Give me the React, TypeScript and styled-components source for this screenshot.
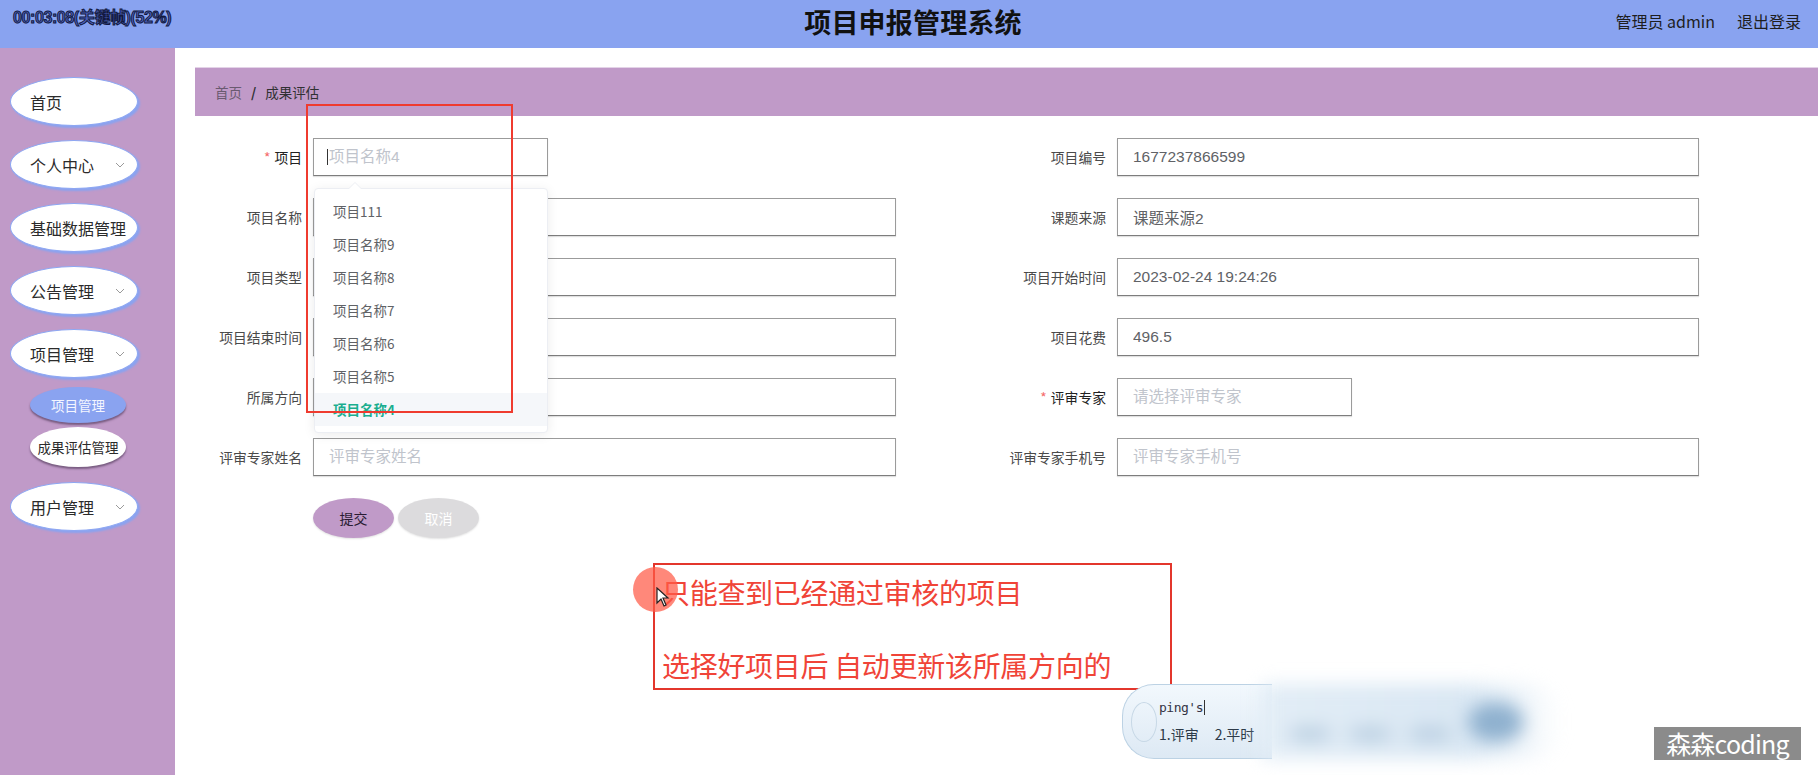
import React from 'react';
import styled, {createGlobalStyle} from 'styled-components';

const GlobalStyle = createGlobalStyle`
  html, body {
    margin: 0;
    padding: 0;
    background: #fff;
    font-family: "Liberation Sans", "Noto Sans CJK SC", sans-serif;
  }
  * {
    box-sizing: border-box;
  }
`

type MenuType = {
    title: string
    arrow: boolean
}

const menus: MenuType[] = [
    {title: '首页', arrow: false},
    {title: '个人中心', arrow: true},
    {title: '基础数据管理', arrow: false},
    {title: '公告管理', arrow: true},
    {title: '项目管理', arrow: true},
]

const options = ['项目111', '项目名称9', '项目名称8', '项目名称7', '项目名称6', '项目名称5', '项目名称4']

type FieldType = {
    label: string
    value?: string
    placeholder?: string
    required?: boolean
    short?: boolean
}

const leftFields: FieldType[] = [
    {label: '项目名称'},
    {label: '项目类型'},
    {label: '项目结束时间'},
    {label: '所属方向'},
    {label: '评审专家姓名', placeholder: '评审专家姓名'},
]

const rightFields: FieldType[] = [
    {label: '项目编号', value: '1677237866599'},
    {label: '课题来源', value: '课题来源2'},
    {label: '项目开始时间', value: '2023-02-24 19:24:26'},
    {label: '项目花费', value: '496.5'},
    {label: '评审专家', placeholder: '请选择评审专家', required: true, short: true},
    {label: '评审专家手机号', placeholder: '评审专家手机号'},
]

const Chevron = () => (
    <svg width="10" height="6" viewBox="0 0 10 6">
        <path d="M1 1 L5 5 L9 1" fill="none" stroke="#9a9a9a" strokeWidth="1"/>
    </svg>
)

const App = () => {
    return (
        <Page>
            <GlobalStyle/>
            <Header>
                <span/>
                <Title>项目申报管理系统</Title>
                <UserBar>
                    <span>管理员 admin</span>
                    <span>退出登录</span>
                </UserBar>
                <TimeStamp>00:03:08(关键帧)(52%)</TimeStamp>
            </Header>
            <Body>
                <Sidebar>
                    {menus.map(m => (
                        <MenuItem key={m.title}>
                            <span>{m.title}</span>
                            {m.arrow && <Chevron/>}
                        </MenuItem>
                    ))}
                    <SubMenu>
                        <SubItem active>项目管理</SubItem>
                        <SubItem>成果评估管理</SubItem>
                    </SubMenu>
                    <MenuItem>
                        <span>用户管理</span>
                        <Chevron/>
                    </MenuItem>
                </Sidebar>
                <Main>
                    <Breadcrumb>
                        <Crumb>首页</Crumb>
                        <Slash>/</Slash>
                        <Crumb current>成果评估</Crumb>
                    </Breadcrumb>
                    <Form>
                        <Column>
                            <FormItem>
                                <Label required>项目</Label>
                                <SelectWrap>
                                    <Input short placeholder="项目名称4" readOnly/>
                                    <Caret/>
                                    <Popper>
                                        <PopArrow/>
                                        {options.map(o => (
                                            <Option key={o} selected={o === '项目名称4'}>{o}</Option>
                                        ))}
                                    </Popper>
                                </SelectWrap>
                            </FormItem>
                            {leftFields.map(f => (
                                <FormItem key={f.label}>
                                    <Label required={f.required}>{f.label}</Label>
                                    <Input placeholder={f.placeholder} defaultValue={f.value} readOnly/>
                                </FormItem>
                            ))}
                        </Column>
                        <Column>
                            {rightFields.map(f => (
                                <FormItem key={f.label}>
                                    <Label required={f.required}>{f.label}</Label>
                                    <Input short={f.short} placeholder={f.placeholder} defaultValue={f.value} readOnly/>
                                </FormItem>
                            ))}
                        </Column>
                    </Form>
                    <Buttons>
                        <Button kind="submit">提交</Button>
                        <Button kind="cancel">取消</Button>
                    </Buttons>
                </Main>
            </Body>

            <MarkBox/>
            <NoteBox>
                <NoteLine>只能查到已经通过审核的项目</NoteLine>
                <NoteLine>选择好项目后 自动更新该所属方向的</NoteLine>
            </NoteBox>
            <ClickDot/>
            <Cursor width="14" height="20" viewBox="0 0 14 20">
                <path d="M1 1 L1 16 L5 12 L8 19 L10 18 L7 11 L12 11 Z" fill="#fff" stroke="#222" strokeWidth="1.2"/>
            </Cursor>

            <Ime>
                <ImeClear>
                    <ImeSwirl/>
                    <ImeText>
                        <ImeInput>ping's</ImeInput>
                        <ImeCandidates>
                            <span>1.评审</span>
                            <span>2.平时</span>
                        </ImeCandidates>
                    </ImeText>
                </ImeClear>
                <ImeBlur>
                    <Blob w={44}/>
                    <Blob w={44}/>
                    <Blob w={44}/>
                    <Blob w={56} dark/>
                </ImeBlur>
            </Ime>
            <Watermark>森森coding</Watermark>
        </Page>
    );
};

export default App;

const Page = styled.div`
  position: relative;
  width: 1818px;
  height: 775px;
  overflow: hidden;
  background: #fff;
`

const Header = styled.header`
  position: relative;
  height: 48px;
  background: #89a3f0;
  display: grid;
  grid-template-columns: 1fr auto 1fr;
  align-items: center;
`

const Title = styled.h1`
  margin: 0 0 6px 8px;
  font-family: "Noto Sans CJK SC", sans-serif;
  font-size: 27px;
  font-weight: 700;
  color: #111;
  letter-spacing: 0.2px;
`

const UserBar = styled.div`
  justify-self: end;
  display: flex;
  gap: 22px;
  padding-right: 17px;
  margin-bottom: 6px;
  font-family: "Noto Sans CJK SC", sans-serif;
  font-size: 16px;
  color: #1e1e1e;
`

const TimeStamp = styled.div`
  position: absolute;
  left: 13px;
  top: 4px;
  font-family: "Liberation Sans", "Noto Sans CJK SC", sans-serif;
  font-size: 16px;
  font-weight: 700;
  color: #4d62c0;
  -webkit-text-stroke: 1px #121940;
  letter-spacing: -0.4px;
  white-space: nowrap;
`

const Body = styled.div`
  display: flex;
  height: 727px;
`

const Sidebar = styled.nav`
  width: 175px;
  flex-shrink: 0;
  background: #c09ac8;
  padding: 29px 0 0 10px;
  display: flex;
  flex-direction: column;
`

const MenuItem = styled.div`
  width: 128px;
  height: 49px;
  margin-bottom: 14px;
  border-radius: 50%;
  background: #fff;
  border: 1px solid #8ea7f2;
  box-shadow: 2px 2px 2px #8aa3f0;
  display: flex;
  align-items: center;
  justify-content: space-between;
  padding: 0 12px 0 19px;
  font-family: "Noto Sans CJK SC", sans-serif;
  font-size: 16px;
  color: #2b2b2b;
  white-space: nowrap;
`

const SubMenu = styled.div`
  display: flex;
  flex-direction: column;
  gap: 4px;
  margin: -5px 0 15px 20px;
`

const SubItem = styled.div<{ active?: boolean }>`
  width: 96px;
  height: ${props => props.active ? '36px' : '40px'};
  border-radius: 50%;
  background: ${props => props.active ? '#8aa3f0' : '#fff'};
  color: ${props => props.active ? '#f4f6ff' : '#2b2b2b'};
  box-shadow: 0 2px 2px rgba(60, 40, 70, 0.55);
  display: flex;
  align-items: center;
  justify-content: center;
  font-family: "Noto Sans CJK SC", sans-serif;
  font-size: 13.5px;
  white-space: nowrap;
`

const Main = styled.main`
  flex: 1;
  padding: 19px 0 0 20px;
  font-family: "Noto Sans CJK SC", sans-serif;
`

const Breadcrumb = styled.div`
  height: 49px;
  background: #c09ac8;
  border-top: 1px solid #e3d3e7;
  display: flex;
  align-items: center;
  padding-left: 20px;
  font-size: 13.5px;
`

const Crumb = styled.span<{ current?: boolean }>`
  color: ${props => props.current ? '#303133' : '#6a5a70'};
`

const Slash = styled.span`
  margin: 0 9px;
  font-weight: 700;
  color: #303133;
`

const Form = styled.div`
  margin-top: 22px;
  display: grid;
  grid-template-columns: 701px 700px;
  column-gap: 103px;
`

const Column = styled.div`
  display: flex;
  flex-direction: column;
  gap: 22px;
`

const FormItem = styled.div`
  display: flex;
  align-items: center;
  height: 38px;
`

const Label = styled.label<{ required?: boolean }>`
  width: 118px;
  flex-shrink: 0;
  padding-right: 11px;
  text-align: right;
  font-size: 13.8px;
  color: ${props => props.required ? '#222' : '#4a4a4a'};
  white-space: nowrap;

  &::before {
    content: ${props => props.required ? "'*'" : "''"};
    color: #f56c6c;
    margin-right: 4px;
  }
`

const SelectWrap = styled.div`
  position: relative;
  display: flex;
  align-items: center;
`

const Input = styled.input<{ short?: boolean }>`
  width: ${props => props.short ? '235px' : '583px'};
  height: 38px;
  border: 1px solid #9b9b9b;
  border-bottom-color: #7d7d7d;
  box-shadow: 0 1px 1px rgba(0, 0, 0, 0.12);
  padding: 0 15px;
  font-family: "Liberation Sans", "Noto Sans CJK SC", sans-serif;
  font-size: 15.5px;
  color: #606266;
  outline: none;
  background: #fff;

  &::placeholder {
    color: #c0c4cc;
  }
`

const Caret = styled.span`
  position: absolute;
  left: 14px;
  top: 11px;
  width: 1px;
  height: 16px;
  background: #333;
`

const Popper = styled.div`
  position: absolute;
  left: 1px;
  top: 50px;
  width: 234px;
  padding: 6px 0;
  background: #fff;
  border: 1px solid #eceef3;
  border-radius: 4px;
  box-shadow: 0 2px 12px rgba(0, 0, 0, 0.08);
  z-index: 5;
`

const PopArrow = styled.span`
  position: absolute;
  top: -6px;
  left: 34px;
  width: 0;
  height: 0;
  border-left: 6px solid transparent;
  border-right: 6px solid transparent;
  border-bottom: 6px solid #fff;
  filter: drop-shadow(0 -1px 0 #eceef3);
`

const Option = styled.div<{ selected?: boolean }>`
  height: 33px;
  line-height: 33px;
  padding-left: 18px;
  font-size: 13.5px;
  color: ${props => props.selected ? '#1aae8f' : '#606266'};
  font-weight: ${props => props.selected ? 700 : 400};
  background: ${props => props.selected ? '#f5f7fa' : 'transparent'};
`

const Buttons = styled.div`
  margin: 22px 0 0 118px;
  display: flex;
  gap: 4px;
`

const Button = styled.button<{ kind: 'submit' | 'cancel' }>`
  width: 81px;
  height: 40px;
  border: none;
  border-radius: 50%;
  background: ${props => props.kind === 'submit' ? '#c09ac8' : '#dcdbdd'};
  color: ${props => props.kind === 'submit' ? '#2a1c33' : '#fff'};
  box-shadow: 0 1px 2px rgba(0, 0, 0, 0.12);
  font-family: "Noto Sans CJK SC", sans-serif;
  font-size: 14px;
`

const MarkBox = styled.div`
  position: absolute;
  left: 306px;
  top: 104px;
  width: 207px;
  height: 309px;
  border: 2px solid #ef3b2f;
  pointer-events: none;
  z-index: 10;
`

const NoteBox = styled.div`
  position: absolute;
  left: 653px;
  top: 563px;
  width: 519px;
  height: 127px;
  border: 2px solid #e3362c;
  padding: 7px 0 0 7px;
  display: flex;
  flex-direction: column;
  gap: 33px;
`

const NoteLine = styled.div`
  font-family: "Noto Sans CJK SC", sans-serif;
  font-size: 28px;
  line-height: 40px;
  color: #f04438;
  white-space: nowrap;
  letter-spacing: -0.3px;
`

const ClickDot = styled.div`
  position: absolute;
  left: 633px;
  top: 567px;
  width: 45px;
  height: 45px;
  border-radius: 50%;
  background: rgba(255, 90, 70, 0.72);
`

const Cursor = styled.svg`
  position: absolute;
  left: 656px;
  top: 587px;
`

const Ime = styled.div`
  position: absolute;
  left: 1122px;
  top: 684px;
  width: 440px;
  height: 75px;
  display: flex;
`

const ImeClear = styled.div`
  width: 150px;
  height: 75px;
  border-radius: 32px 0 0 32px;
  background: linear-gradient(#f2f8fd, #dde9f4);
  border: 1px solid #bcd2e4;
  border-right: none;
  display: flex;
  align-items: center;
`

const ImeSwirl = styled.div`
  width: 26px;
  height: 40px;
  margin-left: 8px;
  border: 1px solid #c7d8e6;
  border-radius: 50%;
`

const ImeText = styled.div`
  display: flex;
  flex-direction: column;
  gap: 9px;
  margin-left: 2px;
`

const ImeInput = styled.div`
  font-family: "DejaVu Sans Mono", monospace;
  font-size: 13px;
  color: #334;
  letter-spacing: -0.5px;
  border-right: 1px solid #333;
  width: fit-content;
  padding-right: 1px;
`

const ImeCandidates = styled.div`
  display: flex;
  gap: 16px;
  font-family: "Noto Sans CJK SC", sans-serif;
  font-size: 14px;
  color: #2d3a48;
  white-space: nowrap;
`

const ImeBlur = styled.div`
  flex: 1;
  height: 75px;
  margin-left: -10px;
  border-radius: 0 38px 38px 0;
  background: linear-gradient(90deg, #e2edf6, #d9e7f3 70%, rgba(240, 246, 251, 0));
  filter: blur(9px);
  display: flex;
  align-items: center;
  gap: 16px;
  padding: 24px 0 0 26px;
`

const Blob = styled.div<{ w: number; dark?: boolean }>`
  width: ${props => props.w}px;
  height: ${props => props.dark ? '40px' : '14px'};
  margin-top: ${props => props.dark ? '-24px' : '0'};
  border-radius: 50%;
  background: ${props => props.dark ? '#8fb1cf' : '#b8cde0'};
`

const Watermark = styled.div`
  position: absolute;
  left: 1654px;
  top: 727px;
  width: 147px;
  height: 33px;
  background: #8b8b8b;
  color: #fff;
  font-family: "Noto Sans CJK SC", sans-serif;
  font-size: 25px;
  line-height: 33px;
  text-align: center;
  white-space: nowrap;
  letter-spacing: -0.8px;
`
